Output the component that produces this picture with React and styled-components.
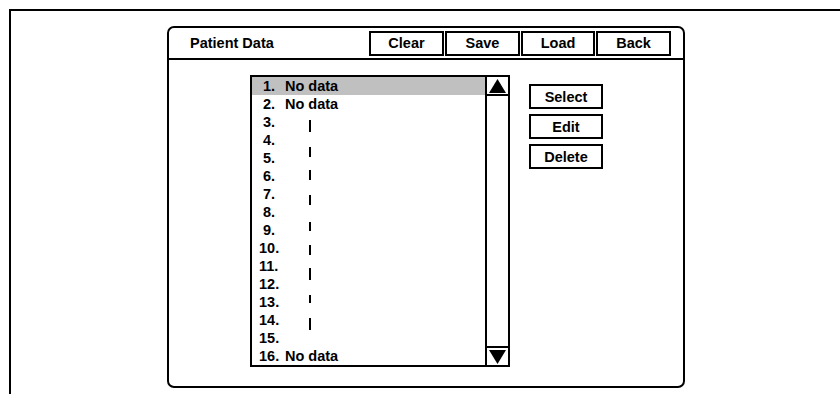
import React from "react";
import styled, { createGlobalStyle } from "styled-components";

const GlobalStyle = createGlobalStyle`
  html, body {
    margin: 0;
    padding: 0;
    background: #ffffff;
    overflow: hidden;
  }
  body {
    font-family: "Liberation Sans", Arial, sans-serif;
    color: #000000;
  }
`;

const Frame = styled.div`
  box-sizing: border-box;
  margin: 9px 0 0 9px;
  height: 385px;
  border-top: 2px solid #000;
  border-left: 2px solid #000;
  padding: 15px 0 0 156px;
`;

const Panel = styled.div`
  width: 514px;
  height: 358px;
  border: 2px solid #000;
  border-radius: 7px;
  display: flex;
  flex-direction: column;
`;

const Header = styled.div`
  height: 30px;
  border-bottom: 2px solid #000;
  display: flex;
  align-items: center;
  padding: 0 12px 0 21px;
`;

const Title = styled.div`
  flex: 1;
  font-size: 14.5px;
  font-weight: bold;
`;

const ToolBar = styled.div`
  display: flex;
  gap: 1px;
`;

const Button = styled.button`
  width: ${({ $w }) => $w || 75}px;
  height: 25px;
  border: 2px solid #000;
  background: #fff;
  font-family: "Liberation Sans", Arial, sans-serif;
  font-size: 14.5px;
  font-weight: bold;
  color: #000;
  padding: 0;
  cursor: pointer;
`;

const Body = styled.div`
  flex: 1;
  display: flex;
  align-items: flex-start;
  padding: 15px 0 0 81px;
`;

const ListBox = styled.div`
  display: flex;
  height: 292px;
  border-top: 2px solid #000;
  border-left: 2px solid #000;
  border-bottom: 2px solid #000;
  box-sizing: border-box;
`;

const Rows = styled.div`
  width: 233px;
  display: flex;
  flex-direction: column;
`;

const Row = styled.div`
  height: 18px;
  display: flex;
  align-items: center;
  font-size: 14.5px;
  font-weight: bold;
  background: ${({ $selected }) => ($selected ? "#c0c0c0" : "transparent")};
  white-space: nowrap;
`;

const Num = styled.span`
  box-sizing: border-box;
  width: 33px;
  padding-left: ${({ $wide }) => ($wide ? 7 : 11)}px;
`;

const Label = styled.span``;

const Mark = styled.span`
  align-self: flex-start;
  display: inline-block;
  width: 2px;
  height: ${({ $h }) => $h}px;
  margin-top: ${({ $top }) => $top}px;
  margin-left: 24px;
  background: #000;
`;

const ScrollBar = styled.div`
  width: 21px;
  border-left: 2px solid #000;
  border-right: 2px solid #000;
  display: flex;
  flex-direction: column;
  justify-content: space-between;
`;

const ArrowButton = styled.div`
  height: 17px;
  display: flex;
  align-items: center;
  justify-content: center;
  border-top: ${({ $down }) => ($down ? "2px solid #000" : "none")};
  border-bottom: ${({ $down }) => ($down ? "none" : "2px solid #000")};
`;

const Side = styled.div`
  display: flex;
  flex-direction: column;
  gap: 5px;
  margin: 9px 0 0 19px;
`;

const marks = {
  3: [7, 12],
  5: [-2, 10],
  6: [3, 10],
  7: [10, 10],
  9: [1, 9],
  10: [6, 10],
  11: [11, 12],
  13: [2, 8],
  14: [7, 12],
};

const Triangle = ({ down }) => (
  <svg width="17" height="14" viewBox="0 0 17 14">
    <polygon
      points={down ? "0,0 17,0 8.5,14" : "8.5,0 17,14 0,14"}
      fill="#000"
    />
  </svg>
);

export default function App() {
  const rows = Array.from({ length: 16 }, (_, i) => i + 1);
  return (
    <>
      <GlobalStyle />
      <Frame>
        <Panel>
          <Header>
            <Title>Patient Data</Title>
            <ToolBar>
              <Button>Clear</Button>
              <Button>Save</Button>
              <Button $w={74}>Load</Button>
              <Button>Back</Button>
            </ToolBar>
          </Header>
          <Body>
            <ListBox>
              <Rows>
                {rows.map((n) => {
                  const hasData = n === 1 || n === 2 || n === 16;
                  const mark = marks[n];
                  return (
                    <Row key={n} $selected={n === 1}>
                      <Num $wide={n >= 10}>{n}.</Num>
                      {hasData && <Label>No data</Label>}
                      {mark && <Mark $top={mark[0]} $h={mark[1]} />}
                    </Row>
                  );
                })}
              </Rows>
              <ScrollBar>
                <ArrowButton>
                  <Triangle />
                </ArrowButton>
                <ArrowButton $down>
                  <Triangle down />
                </ArrowButton>
              </ScrollBar>
            </ListBox>
            <Side>
              <Button $w={74}>Select</Button>
              <Button $w={74}>Edit</Button>
              <Button $w={74}>Delete</Button>
            </Side>
          </Body>
        </Panel>
      </Frame>
    </>
  );
}
